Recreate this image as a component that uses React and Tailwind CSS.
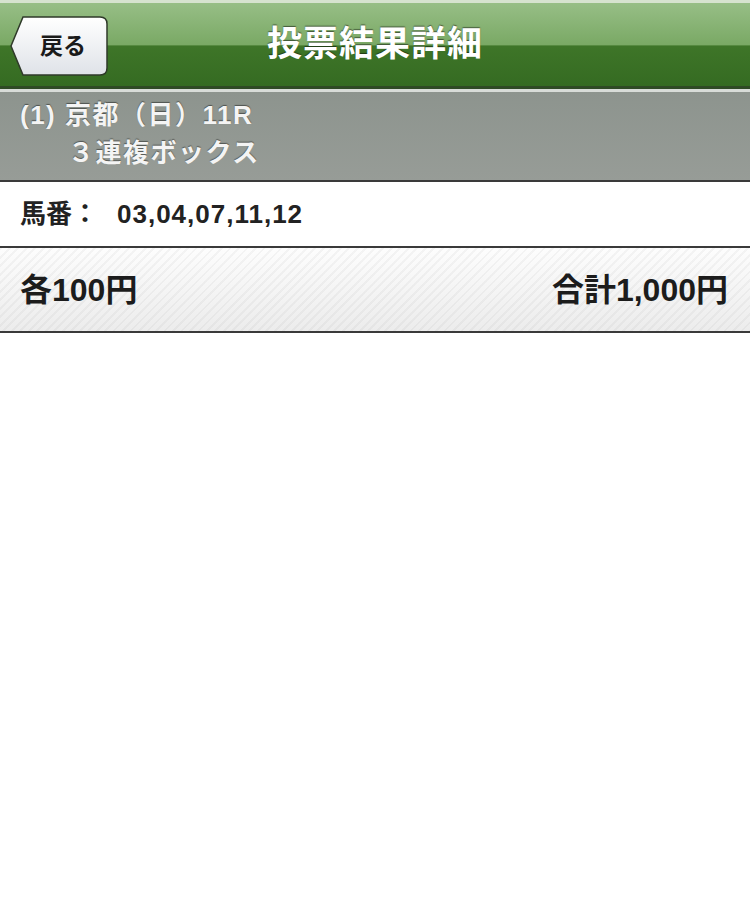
export default function App() {
  const font = {
    fontFamily: '"Liberation Sans", "Noto Sans CJK JP", sans-serif',
  };

  return (
    <div className="w-[750px] min-h-[898px] bg-white" style={font}>
      {/* HEADER */}
      <div className="border-t-[3px] border-[#d6e3cf]">
        <div className="relative h-[83px] flex items-center justify-center bg-[linear-gradient(to_bottom,#97be86_0%,#7aa965_50%,#3e7528_52%,#356b22_100%)]">
          {/* back button */}
          <button className="absolute left-[10px] top-[13px] w-[98px] h-[60px] flex items-center justify-center pl-[8px]">
            <svg
              className="absolute inset-0"
              width="98"
              height="60"
              viewBox="0 0 98 60"
            >
              <defs>
                <linearGradient id="bk" x1="0" y1="0" x2="0" y2="1">
                  <stop offset="0" stopColor="#ffffff" />
                  <stop offset="1" stopColor="#dfe2e8" />
                </linearGradient>
              </defs>
              <path
                d="M13 1 H90 Q97 1 97 8 V52 Q97 59 90 59 H13 L1 30 Z"
                fill="url(#bk)"
                stroke="#2f3a2a"
                strokeWidth="1.5"
              />
            </svg>
            <span className="relative text-[23px] font-bold text-[#1a1a1a]">
              戻る
            </span>
          </button>
          <h1 className="text-[35px] font-bold text-white tracking-[1px] [text-shadow:0_-1px_1px_rgba(0,0,0,0.5)]">
            投票結果詳細
          </h1>
        </div>
        <div className="h-[3px] bg-[#2f4a25]" />
        <div className="h-[3px] bg-[#d8dcd8]" />
      </div>

      {/* RACE INFO */}
      <div className="h-[88px] px-[20px] pt-[4px] bg-[linear-gradient(to_bottom,#8d948e,#979c97)] text-[#f4f4f4] text-[26px] font-bold leading-[38px] [text-shadow:0_-1px_1px_rgba(0,0,0,0.45)]">
        <div className="tracking-[1.5px]">(1) 京都（日）11R</div>
        <div className="pl-[48px] tracking-[1.5px]">３連複ボックス</div>
      </div>
      <div className="h-[2px] bg-[#3a3a3a]" />

      {/* HORSE NUMBERS */}
      <div className="h-[64px] px-[20px] flex items-center text-[26px] font-bold text-[#222]">
        <span>馬番：</span>
        <span className="ml-[19px] tracking-[1px]">03,04,07,11,12</span>
      </div>
      <div className="h-[2px] bg-[#3a3a3a]" />

      {/* AMOUNT */}
      <div className="h-[83px] pl-[20px] pr-[22px] flex items-center justify-between text-[32px] font-bold text-[#1c1c1c] bg-[repeating-linear-gradient(135deg,rgba(0,0,0,0.035)_0px,rgba(0,0,0,0.035)_2px,rgba(255,255,255,0)_2px,rgba(255,255,255,0)_6px),linear-gradient(to_bottom,#fdfdfd,#ececec)]">
        <span>各100円</span>
        <span>合計1,000円</span>
      </div>
      <div className="h-[2px] bg-[#3a3a3a]" />
    </div>
  );
}
